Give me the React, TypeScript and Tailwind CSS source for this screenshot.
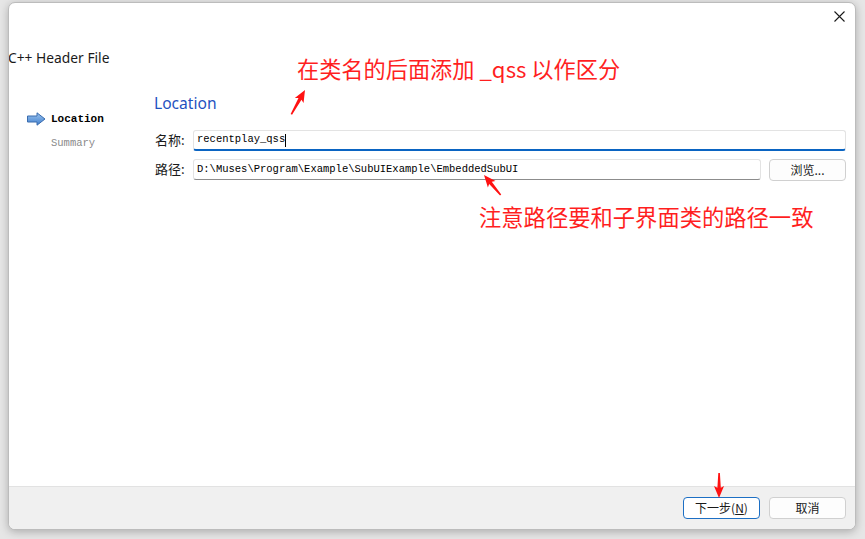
import React from "react";

const ui = { fontFamily: '"Noto Sans", "Noto Sans CJK SC", sans-serif' };
const cjk = { fontFamily: '"Noto Sans CJK SC", "Noto Sans", sans-serif' };
const mono = { fontFamily: '"Liberation Mono", "Noto Sans CJK SC", monospace' };

function Arrow({ x, y, len, angle }: { x: number; y: number; len: number; angle: number }) {
  return (
    <g transform={`translate(${x} ${y}) rotate(${angle})`}>
      <path
        d={`M0 0 L5 12 L1.6 10.2 L0.7 ${len} L-0.9 ${len} L-1.8 10.2 L-5 12 Z`}
        fill="#ff1212"
      />
    </g>
  );
}

export default function App() {
  return (
    <div className="w-[865px] h-[539px] bg-[#e6e6e6] pl-[8px] pt-[2px] overflow-hidden" style={ui}>
      <div className="relative w-[848px] h-[528px] bg-white rounded-[7px] border border-[#bcbcbc] shadow-[0_2px_8px_rgba(0,0,0,0.25)] flex flex-col overflow-hidden">
        {/* header */}
        <div className="h-[26px] flex justify-end items-center pr-[10px]">
          <svg width="11" height="11" viewBox="0 0 11 11">
            <path d="M0.5 0.5 L10.5 10.5 M10.5 0.5 L0.5 10.5" stroke="#1a1a1a" strokeWidth="1.1" />
          </svg>
        </div>
        <div className="mt-[20px] h-[18px] leading-[18px] text-[13.8px] text-[#1a1a1a] -ml-[1px]">C++ Header File</div>
        {/* content */}
        <div className="mt-[25px] flex">
          <div className="w-[145px] pl-[18px] pt-[19px] flex flex-col gap-[9px]">
            <div className="h-[16px] flex items-center gap-[5px]">
              <svg width="19" height="14" viewBox="0 0 19 14">
                <defs>
                  <linearGradient id="ag" x1="0" y1="0" x2="0" y2="1">
                    <stop offset="0" stopColor="#9cc4ee" />
                    <stop offset="1" stopColor="#3f7fcf" />
                  </linearGradient>
                </defs>
                <path d="M0.5 4 H10 V0.8 L18 7 L10 13.2 V10 H0.5 Z" fill="url(#ag)" stroke="#3a6cae" strokeWidth="1" />
              </svg>
              <span className="text-[11px] font-bold text-black" style={mono}>Location</span>
            </div>
            <div className="h-[16px] flex items-center pl-[24px]">
              <span className="text-[10.5px] text-[#8a8a8a]" style={mono}>Summary</span>
            </div>
          </div>
          <div className="flex-1 pr-[9px]">
            <div className="h-[22px] leading-[22px] text-[15.6px] text-[#1f52c0]">Location</div>
            <div className="mt-[16px] flex flex-col gap-[8px]">
              <div className="flex items-center h-[21px]">
                <div className="w-[39px] pl-[1px] text-[13px] text-[#1a1a1a] -mt-[1px]" style={cjk}>名称:</div>
                <div className="flex-1 h-[21px] bg-white border border-[#e3e3e3] border-b-[2px] border-b-[#0a64c2] rounded-[3px] flex items-center pl-[3px]">
                  <span className="text-[10.5px] text-black" style={mono}>recentplay_qss</span>
                  <span className="w-[1px] h-[13px] bg-black" />
                </div>
              </div>
              <div className="flex items-center h-[21px]">
                <div className="w-[39px] pl-[1px] text-[13px] text-[#1a1a1a] -mt-[1px]" style={cjk}>路径:</div>
                <div className="w-[568px] h-[21px] bg-white border border-[#e3e3e3] border-b-[#8c8c8c] rounded-[3px] flex items-center pl-[3px]">
                  <span className="text-[10.5px] text-black whitespace-nowrap" style={mono}>D:\Muses\Program\Example\SubUIExample\EmbeddedSubUI</span>
                </div>
                <div className="ml-[8px] w-[77px] h-[22px] bg-[#fdfdfd] border border-[#d0d0d0] rounded-[4px] flex items-center justify-center text-[12px] text-[#1a1a1a]" style={cjk}>
                  浏览...
                </div>
              </div>
            </div>
          </div>
        </div>
        {/* bottom bar */}
        <div className="mt-auto h-[43px] bg-[#f0f0f0] border-t border-[#e2e2e2] flex justify-end items-start pt-[10px] pr-[9px] gap-[9px]">
          <div className="w-[77px] h-[22px] bg-white border border-[#1d6fc4] rounded-[4px] flex items-center justify-center text-[12px] text-[#1a1a1a]" style={cjk}>
            下一步(<span className="underline">N</span>)
          </div>
          <div className="w-[77px] h-[22px] bg-[#fdfdfd] border border-[#d0d0d0] rounded-[4px] flex items-center justify-center text-[12px] text-[#1a1a1a]" style={cjk}>
            取消
          </div>
        </div>

        {/* annotations */}
        <div className="absolute left-[288px] top-[51px] text-[22.2px] leading-[28px] text-[#ff1f1f] whitespace-nowrap" style={cjk}>
          在类名的后面添加 _qss 以作区分
        </div>
        <div className="absolute left-[470px] top-[199px] text-[22.3px] leading-[28px] text-[#ff1f1f] whitespace-nowrap" style={cjk}>
          注意路径要和子界面类的路径一致
        </div>
        <svg className="absolute left-0 top-0 pointer-events-none" width="848" height="528">
          <Arrow x={296} y={87} len={28} angle={29} />
          <Arrow x={475} y={172} len={26} angle={-40} />
          <Arrow x={710} y={495} len={25} angle={180} />
        </svg>
      </div>
    </div>
  );
}
